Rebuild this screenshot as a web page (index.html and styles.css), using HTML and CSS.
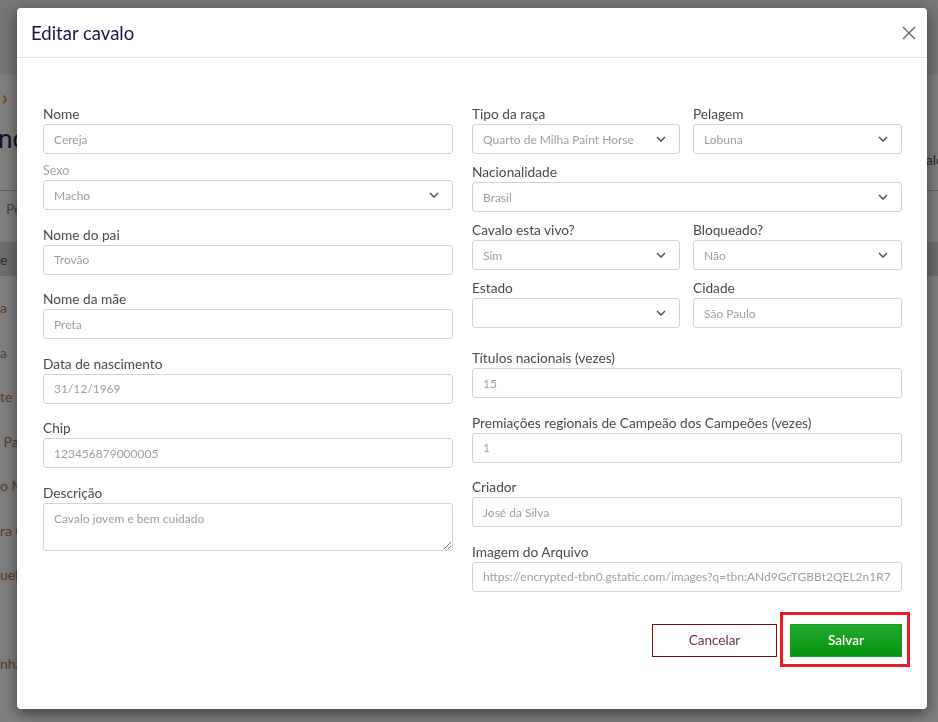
FILE: index.html
```html
<!DOCTYPE html>
<html lang="pt-BR">
<head>
<meta charset="utf-8">
<title>Editar cavalo</title>
<link rel="stylesheet" href="styles.css">
</head>
<body>
<div class="page">
  <div class="topbar"></div>
  <div class="crumbs">›</div>
  <div class="page-head">
    <h1 class="page-title">nci</h1>
    <span class="head-action">alo</span>
  </div>
  <div class="tabs"><span class="tab">Pe</span></div>
  <div class="thead"><span class="th">e</span></div>
  <ul class="rows">
    <li class="row-item">a</li>
    <li class="row-item">a</li>
    <li class="row-item">te</li>
    <li class="row-item">&nbsp;Par</li>
    <li class="row-item">o M</li>
    <li class="row-item">ra Q</li>
    <li class="row-item">uela</li>
    <li class="row-item"></li>
    <li class="row-item">nha</li>
  </ul>
</div>

<div class="backdrop"></div>

<div class="modal">
  <div class="modal-header">
    <h2 class="modal-title">Editar cavalo</h2>
    <button class="close" type="button" aria-label="Fechar">
      <svg width="14" height="14" viewBox="0 0 14 14"><path d="M1 1L13 13M13 1L1 13" stroke="#6f6f6f" stroke-width="1.5" fill="none"/></svg>
    </button>
  </div>
  <div class="modal-body">
    <div class="col">
      <div class="group tight">
        <label class="label">Nome</label>
        <input class="control" value="Cereja">
      </div>
      <div class="group">
        <label class="label muted">Sexo</label>
        <div class="control select"><span>Macho</span><svg class="chev" width="10" height="6" viewBox="0 0 10 6"><path d="M1 1L5 5L9 1" stroke="#444" stroke-width="1.3" fill="none"/></svg></div>
      </div>
      <div class="group">
        <label class="label">Nome do pai</label>
        <input class="control" value="Trovão">
      </div>
      <div class="group">
        <label class="label">Nome da mãe</label>
        <input class="control" value="Preta">
      </div>
      <div class="group">
        <label class="label">Data de nascimento</label>
        <input class="control" value="31/12/1969">
      </div>
      <div class="group">
        <label class="label">Chip</label>
        <input class="control" value="123456879000005">
      </div>
      <div class="group">
        <label class="label">Descrição</label>
        <textarea class="control area">Cavalo jovem e bem cuidado</textarea>
      </div>
    </div>

    <div class="col">
      <div class="row2 tight">
        <div>
          <label class="label">Tipo da raça</label>
          <div class="control select"><span>Quarto de Milha Paint Horse</span><svg class="chev" width="10" height="6" viewBox="0 0 10 6"><path d="M1 1L5 5L9 1" stroke="#444" stroke-width="1.3" fill="none"/></svg></div>
        </div>
        <div>
          <label class="label">Pelagem</label>
          <div class="control select"><span>Lobuna</span><svg class="chev" width="10" height="6" viewBox="0 0 10 6"><path d="M1 1L5 5L9 1" stroke="#444" stroke-width="1.3" fill="none"/></svg></div>
        </div>
      </div>
      <div class="group tight">
        <label class="label">Nacionalidade</label>
        <div class="control select"><span>Brasil</span><svg class="chev" width="10" height="6" viewBox="0 0 10 6"><path d="M1 1L5 5L9 1" stroke="#444" stroke-width="1.3" fill="none"/></svg></div>
      </div>
      <div class="row2 tight">
        <div>
          <label class="label">Cavalo esta vivo?</label>
          <div class="control select"><span>Sim</span><svg class="chev" width="10" height="6" viewBox="0 0 10 6"><path d="M1 1L5 5L9 1" stroke="#444" stroke-width="1.3" fill="none"/></svg></div>
        </div>
        <div>
          <label class="label">Bloqueado?</label>
          <div class="control select"><span>Não</span><svg class="chev" width="10" height="6" viewBox="0 0 10 6"><path d="M1 1L5 5L9 1" stroke="#444" stroke-width="1.3" fill="none"/></svg></div>
        </div>
      </div>
      <div class="row2 wide">
        <div>
          <label class="label">Estado</label>
          <div class="control select"><span></span><svg class="chev" width="10" height="6" viewBox="0 0 10 6"><path d="M1 1L5 5L9 1" stroke="#444" stroke-width="1.3" fill="none"/></svg></div>
        </div>
        <div>
          <label class="label">Cidade</label>
          <input class="control" value="São Paulo">
        </div>
      </div>
      <div class="group">
        <label class="label">Títulos nacionais (vezes)</label>
        <input class="control" value="15">
      </div>
      <div class="group">
        <label class="label">Premiações regionais de Campeão dos Campeões (vezes)</label>
        <input class="control" value="1">
      </div>
      <div class="group">
        <label class="label">Criador</label>
        <input class="control" value="José da Silva">
      </div>
      <div class="group last">
        <label class="label">Imagem do Arquivo</label>
        <input class="control" value="https://encrypted-tbn0.gstatic.com/images?q=tbn:ANd9GcTGBBt2QEL2n1R79cZ2a">
      </div>
      <div class="actions">
        <button class="btn btn-cancel" type="button">Cancelar</button>
        <button class="btn btn-save" type="button">Salvar</button>
      </div>
    </div>
  </div>
</div>
</body>
</html>
```

FILE: styles.css
```css
* { box-sizing: border-box; }

html, body {
  margin: 0;
  padding: 0;
  width: 938px;
  height: 722px;
  overflow: hidden;
  font-family: "Lato", "Open Sans", sans-serif;
  background: #ffffff;
}

/* ---------- background page ---------- */
.page {
  width: 938px;
  height: 722px;
}
.topbar {
  height: 75px;
  background: #ececec;
}
.crumbs {
  margin-top: 12px;
  height: 20px;
  line-height: 20px;
  padding-left: 2px;
  font-size: 20px;
  font-weight: 700;
  color: #f29a1c;
}
.page-head {
  height: 83px;
  display: flex;
  justify-content: space-between;
  align-items: flex-start;
}
.page-title {
  margin: 16px 0 0 -2px;
  font-size: 26px;
  line-height: 30px;
  font-weight: 400;
  color: #24245e;
}
.head-action {
  margin-top: 43px;
  margin-right: -6px;
  line-height: 20px;
  font-size: 14px;
  color: #555;
}
.tabs {
  height: 35px;
  border-top: 1px solid #bcbcbc;
  display: flex;
  align-items: center;
  padding-left: 6px;
  font-size: 14px;
  color: #8a8a8a;
}
.thead {
  margin-top: 17px;
  height: 34px;
  background: #dcdcdc;
  display: flex;
  align-items: center;
  font-size: 14px;
  color: #555;
}
.rows {
  list-style: none;
  margin: 0;
  padding: 10px 0 0 0;
}
.row-item {
  height: 44.5px;
  line-height: 44.5px;
  font-size: 14px;
  color: #b8764e;
  white-space: nowrap;
}

.backdrop {
  position: fixed;
  inset: 0;
  background: rgba(0, 0, 0, 0.5);
}

/* ---------- modal ---------- */
.modal {
  position: fixed;
  left: 17px;
  top: 8px;
  width: 910px;
  height: 701px;
  background: #ffffff;
  border-radius: 4px;
  box-shadow: 0 5px 15px rgba(0, 0, 0, 0.5);
  display: flex;
  flex-direction: column;
}
.modal-header {
  height: 50px;
  border-bottom: 1px solid #e2e2e2;
  display: flex;
  align-items: center;
  justify-content: space-between;
  padding: 0 11px 0 14px;
}
.modal-title {
  margin: 0;
  font-size: 18.5px;
  font-weight: 400;
  color: #16164a;
}
.close {
  border: 0;
  background: transparent;
  padding: 0;
  width: 14px;
  height: 14px;
  display: flex;
}

.modal-body {
  padding: 46px 25px 0 26px;
  display: grid;
  grid-template-columns: 410px 430px;
  column-gap: 19px;
  align-items: start;
}
.col {
  display: flex;
  flex-direction: column;
}
.group {
  margin-bottom: 14.5px;
}
.group.tight,
.row2.tight {
  margin-bottom: 8px;
}
.row2.wide {
  margin-bottom: 20px;
}
.group.last {
  margin-bottom: 32px;
}
.row2 {
  display: grid;
  grid-template-columns: 208px 209px;
  column-gap: 13px;
}

.label {
  display: block;
  font-size: 13.7px;
  line-height: 20px;
  color: #4b4752;
}
.label.muted {
  font-size: 12.5px;
  line-height: 18px;
  color: #a3a3a3;
}

.control {
  display: flex;
  align-items: center;
  width: 100%;
  height: 30px;
  margin: 0;
  padding: 0 10px;
  border: 1px solid #cfd3da;
  border-radius: 3px;
  background: #ffffff;
  font-family: "Lato", "Open Sans", sans-serif;
  font-size: 12px;
  color: #a29ba6;
  outline: none;
}
.select {
  justify-content: space-between;
  padding-right: 13px;
}
.chev {
  flex: none;
}
.area {
  display: block;
  height: 48px;
  padding: 7px 10px;
  resize: vertical;
  line-height: 16px;
}

.actions {
  display: flex;
  justify-content: flex-end;
  gap: 13px;
}
.btn {
  height: 33px;
  font-family: "Lato", "Open Sans", sans-serif;
  font-size: 13.5px;
  cursor: pointer;
}
.btn-cancel {
  width: 125px;
  background: #ffffff;
  border: 1px solid #7d0b0b;
  color: #6d2f55;
}
.btn-save {
  position: relative;
  width: 112px;
  background: linear-gradient(#23a82f, #05950e);
  border: 1px solid #1a9c24;
  color: #ffffff;
  font-weight: 600;
}
.btn-save::after {
  content: "";
  position: absolute;
  left: -11px;
  right: -9px;
  top: -13px;
  bottom: -11px;
  border: 3px solid #ec1c24;
}
```
